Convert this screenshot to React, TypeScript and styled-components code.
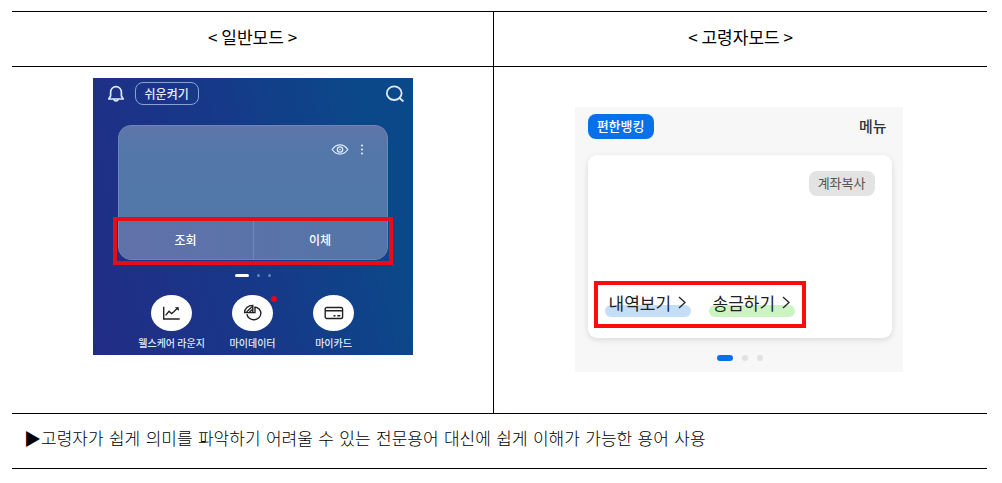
import React from "react";
import styled, { createGlobalStyle } from "styled-components";

const GlobalStyle = createGlobalStyle`
  * { box-sizing: border-box; }
  body {
    margin: 0;
    background: #fff;
    color: #000;
    font-family: "Noto Sans CJK KR", "Noto Sans", sans-serif;
  }
  button {
    margin: 0;
    padding: 0;
    border: 0;
    background: none;
    color: inherit;
    font: inherit;
    cursor: pointer;
  }
  svg { display: block; }
`;

const Page = styled.main`
  padding: 11px 15px 14px 12px;
`;

const CompareTable = styled.table`
  width: 100%;
  border-collapse: collapse;
  table-layout: fixed;
  font-size: 17px;
  line-height: 24px;

  tr { border-top: 1px solid #000; border-bottom: 1px solid #000; }
`;

const FirstColumn = styled.col`
  width: 49.4%;
`;

const HeadCell = styled.th`
  padding: 13px 12px 17px;
  font-weight: 400;
  & + & { border-left: 1px solid #000; }
`;

const ScreenCell = styled.td<{ $align: "top" | "middle" }>`
  padding: ${(p) => (p.$align === "top" ? "11px 12px 58px" : "38px 12px 40px")};
  vertical-align: ${(p) => p.$align};
  & + & { border-left: 1px solid #000; padding-right: 16px; }
`;

const NoteCell = styled.td`
  padding: 13px 12px 17px;
  font-family: "DejaVu Sans", "Noto Sans CJK KR", sans-serif;
  font-weight: 300;
`;

const NormalScreen = styled.section`
  display: flex;
  flex-direction: column;
  max-width: 320px;
  height: 277px;
  margin: 0 auto;
  padding: 4px 0 0;
  background: linear-gradient(75deg, #222c86 0%, #173888 45%, #0b4889 85%);
  color: #fff;
`;

const NormalBar = styled.header`
  display: flex;
  align-items: center;
  gap: 10px;
  padding: 0 8px 0 14px;
`;

const EasyButton = styled.button`
  height: 23px;
  padding: 0 9px;
  border: 1px solid #8ba2d6;
  border-radius: 8px;
  color: #e4ecff;
  font-size: 12px;
  font-weight: 500;
  line-height: 20px;
`;

const IconButton = styled.button<{ $end?: boolean }>`
  color: #dbe9ff;
  margin-left: ${(p) => (p.$end ? "auto" : "0")};
`;

const AccountCard = styled.div`
  margin: 20px 25px 0;
  border: 1px solid #7084b7;
  border-radius: 13px;
  background: linear-gradient(180deg, #5f76aa 0%, #5277a8 20%, #5277a9 100%);
`;

const CardTools = styled.div`
  display: flex;
  justify-content: flex-end;
  align-items: flex-start;
  gap: 8px;
  height: 94px;
  padding: 15px 20px 0 0;
`;

const CardActions = styled.div`
  position: relative;
  display: grid;
  grid-template-columns: 1fr 1fr;
  border-top: 1px solid #7488b9;
  border-radius: 0 0 12px 12px;
  background: linear-gradient(90deg, #6171a9, #5375a8);

  &::after {
    content: "";
    position: absolute;
    inset: -4px -6px -6px;
    border: 4px solid #e60d18;
    pointer-events: none;
  }
`;

const CardAction = styled.button`
  height: 38px;
  font-size: 12px;
  font-weight: 500;
  line-height: 38px;
  & + & { border-left: 1px solid #7387b8; }
`;

const Pager = styled.div<{ $gap: number; $top: number }>`
  display: flex;
  justify-content: center;
  align-items: center;
  gap: ${(p) => p.$gap}px;
  margin-top: ${(p) => p.$top}px;
`;

const PagerDot = styled.span<{ $width: number; $height: number; $color: string }>`
  width: ${(p) => p.$width}px;
  height: ${(p) => p.$height}px;
  border-radius: 3px;
  background: ${(p) => p.$color};
`;

const Shortcuts = styled.nav`
  display: grid;
  grid-template-columns: repeat(3, 81px);
  justify-content: center;
  margin-top: 18px;
`;

const Shortcut = styled.button`
  display: flex;
  flex-direction: column;
  align-items: center;
  gap: 4px;
  color: #dfe8fb;
  font-size: 10px;
  font-weight: 500;
  line-height: 16px;
  white-space: nowrap;
`;

const ShortcutIcon = styled.span`
  position: relative;
  display: grid;
  place-items: center;
  width: 41px;
  height: 36px;
  border-radius: 50%;
  background: #fff;
  color: #222;
`;

const NewBadge = styled.span`
  position: absolute;
  top: 1px;
  right: -4px;
  width: 6px;
  height: 6px;
  border-radius: 50%;
  background: #e3061c;
`;

const SeniorScreen = styled.section`
  display: flex;
  flex-direction: column;
  max-width: 328px;
  height: 265px;
  margin: 0 auto;
  padding: 7px 11px 0 13px;
  background: #f7f7f7;
`;

const SeniorBar = styled.header`
  display: flex;
  justify-content: space-between;
  align-items: center;
  padding-right: 5px;
`;

const Chip = styled.button<{ $tone: "blue" | "gray" }>`
  height: 25px;
  width: 66px;
  border-radius: 8px;
  background: ${(p) => (p.$tone === "blue" ? "#0870e8" : "#e3e3e3")};
  color: ${(p) => (p.$tone === "blue" ? "#fff" : "#555")};
  font-size: 13px;
  font-weight: ${(p) => (p.$tone === "blue" ? 500 : 400)};
  line-height: 24px;
`;

const MenuButton = styled.button`
  color: #333;
  font-size: 15px;
  font-weight: 500;
  line-height: 24px;
`;

const SeniorCard = styled.div`
  display: flex;
  flex-direction: column;
  justify-content: space-between;
  align-items: flex-end;
  height: 183px;
  margin-top: 16px;
  padding: 16px 17px 10px 6px;
  border-radius: 9px;
  background: #fff;
  box-shadow: 0 2px 6px rgba(0, 0, 0, 0.12);
`;

const SeniorActions = styled.div`
  display: flex;
  align-self: flex-start;
  gap: 18px;
  padding: 4px 7px 7px;
  border: 4px solid #fb0d0d;
`;

const SeniorAction = styled.button<{ $mark: string }>`
  position: relative;
  isolation: isolate;
  display: flex;
  align-items: center;
  gap: 7px;
  height: 28px;
  width: 86px;
  padding: 0 4px;
  color: #222;
  font-size: 17px;
  line-height: 24px;
  white-space: nowrap;

  &::before {
    content: "";
    position: absolute;
    z-index: -1;
    inset: 16px 0 0;
    border-radius: 6px;
    background: ${(p) => p.$mark};
  }
`;

const BellIcon = () => (
  <svg width="18" height="19" viewBox="0 0 18 19" fill="none" stroke="currentColor" strokeWidth="1.7" strokeLinejoin="round" strokeLinecap="round">
    <path d="M3.600 8.200a5.400 5.600 0 0 1 10.800 0v3.800l1.800 3H1.800l1.800-3z" />
    <path d="M6.900 15.400a2.200 2.200 0 0 0 4.200 0" />
  </svg>
);

const SearchIcon = () => (
  <svg width="20" height="18" viewBox="0 0 20 18" fill="none" stroke="currentColor" strokeWidth="1.8" strokeLinecap="round">
    <ellipse cx="9.2" cy="8.2" rx="7.4" ry="6.8" />
    <path d="M14.5 13l3.4 3" />
  </svg>
);

const EyeIcon = () => (
  <svg width="18" height="17" viewBox="0 0 18 17" fill="none" stroke="currentColor" strokeWidth="1.3">
    <path d="M1.2 8.5C3.4 5.3 6 3.9 9 3.9s5.6 1.4 7.8 4.6C14.6 11.7 12 13.1 9 13.1S3.4 11.7 1.2 8.5z" />
    <circle cx="9" cy="8.5" r="2.7" />
    <circle cx="9" cy="8.5" r=".8" fill="currentColor" stroke="none" />
  </svg>
);

const MoreIcon = () => (
  <svg width="10" height="17" viewBox="0 0 10 17" fill="currentColor">
    <circle cx="5" cy="4.5" r="1.1" />
    <circle cx="5" cy="8.5" r="1.1" />
    <circle cx="5" cy="12.5" r="1.1" />
  </svg>
);

const ChartIcon = () => (
  <svg width="19" height="16" viewBox="0 0 19 16" fill="none" stroke="currentColor" strokeWidth="1.4">
    <path d="M1.700 1.800v12.200h16" />
    <path d="M3.600 10.400l3.400-4.200 2.600 2.400 2.200-1.800 4-4" />
    <path d="M12.800 2.200h4v3.800z" fill="currentColor" stroke="none" />
  </svg>
);

const PieIcon = () => (
  <svg width="20" height="18" viewBox="0 0 20 18" fill="none" stroke="currentColor" strokeWidth="1.4">
    <path d="M11.500 3a7 6.400 0 1 1-7.600 7.200" />
    <path d="M9.800 1.400v7.200H1.600c0-4.200 3.400-7.200 8.200-7.200z" />
    <path d="M3.600 8l5.400-5.200M6.400 8.300l3-2.800" />
    <path d="M9.800 8.600l2.200-.1V3" />
  </svg>
);

const CardIcon = () => (
  <svg width="20" height="14" viewBox="0 0 20 14" fill="none" stroke="currentColor" strokeWidth="1.400">
    <rect x="1.200" y="1.500" width="17.400" height="11" rx="1.500" />
    <path d="M1.200 4.700h17.400M9.500 9.700h2M13.300 9.700h3" />
  </svg>
);

const ArrowIcon = () => (
  <svg width="8" height="13" viewBox="0 0 8 13" fill="none" stroke="currentColor" strokeWidth="1.3">
    <path d="M1 1l6 5.500L1 12" />
  </svg>
);

const shortcuts = [
  { label: "웰스케어 라운지", icon: <ChartIcon />, isNew: false },
  { label: "마이데이터", icon: <PieIcon />, isNew: true },
  { label: "마이카드", icon: <CardIcon />, isNew: false },
];

function NormalMode() {
  return (
    <NormalScreen>
      <NormalBar>
        <IconButton aria-label="알림"><BellIcon /></IconButton>
        <EasyButton>쉬운켜기</EasyButton>
        <IconButton $end aria-label="검색"><SearchIcon /></IconButton>
      </NormalBar>
      <AccountCard>
        <CardTools>
          <IconButton aria-label="잔액 표시"><EyeIcon /></IconButton>
          <IconButton aria-label="더보기"><MoreIcon /></IconButton>
        </CardTools>
        <CardActions>
          <CardAction>조회</CardAction>
          <CardAction>이체</CardAction>
        </CardActions>
      </AccountCard>
      <Pager $gap={8} $top={14}>
        <PagerDot $width={14} $height={3} $color="#fff" />
        <PagerDot $width={3} $height={3} $color="#6684bd" />
        <PagerDot $width={3} $height={3} $color="#6684bd" />
      </Pager>
      <Shortcuts>
        {shortcuts.map((item) => (
          <Shortcut key={item.label}>
            <ShortcutIcon>
              {item.icon}
              {item.isNew && <NewBadge />}
            </ShortcutIcon>
            {item.label}
          </Shortcut>
        ))}
      </Shortcuts>
    </NormalScreen>
  );
}

function SeniorMode() {
  return (
    <SeniorScreen>
      <SeniorBar>
        <Chip $tone="blue">편한뱅킹</Chip>
        <MenuButton>메뉴</MenuButton>
      </SeniorBar>
      <SeniorCard>
        <Chip $tone="gray">계좌복사</Chip>
        <SeniorActions>
          <SeniorAction $mark="#c5def8">내역보기<ArrowIcon /></SeniorAction>
          <SeniorAction $mark="#ccf3c2">송금하기<ArrowIcon /></SeniorAction>
        </SeniorActions>
      </SeniorCard>
      <Pager $gap={9} $top={17}>
        <PagerDot $width={16} $height={6} $color="#0870e8" />
        <PagerDot $width={6} $height={6} $color="#e1e1e1" />
        <PagerDot $width={6} $height={6} $color="#e1e1e1" />
      </Pager>
    </SeniorScreen>
  );
}

export default function App() {
  return (
    <Page>
      <GlobalStyle />
      <CompareTable>
        <colgroup>
          <FirstColumn />
          <col />
        </colgroup>
        <thead>
          <tr>
            <HeadCell scope="col">&lt; 일반모드 &gt;</HeadCell>
            <HeadCell scope="col">&lt; 고령자모드 &gt;</HeadCell>
          </tr>
        </thead>
        <tbody>
          <tr>
            <ScreenCell $align="top"><NormalMode /></ScreenCell>
            <ScreenCell $align="middle"><SeniorMode /></ScreenCell>
          </tr>
          <tr>
            <NoteCell colSpan={2}>
              ▶고령자가 쉽게 의미를 파악하기 어려울 수 있는 전문용어 대신에 쉽게 이해가 가능한 용어 사용
            </NoteCell>
          </tr>
        </tbody>
      </CompareTable>
    </Page>
  );
}
